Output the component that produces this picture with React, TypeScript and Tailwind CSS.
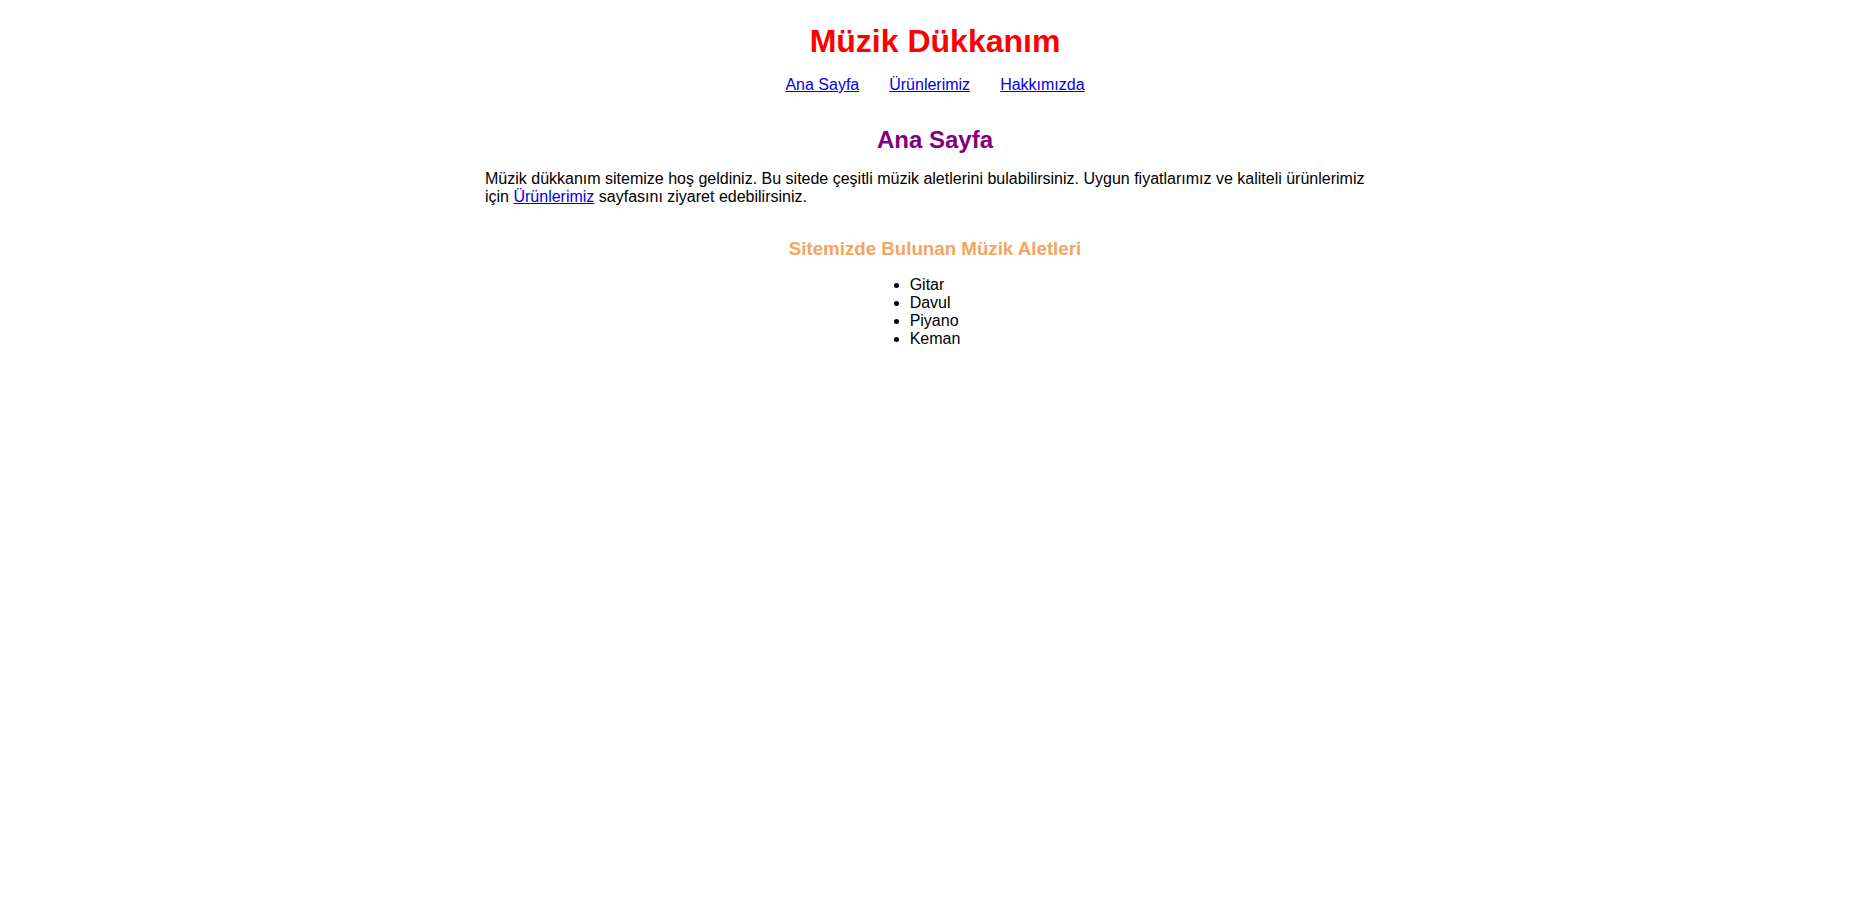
export default function App() {
    const links = ["Ana Sayfa", "Ürünlerimiz", "Hakkımızda"];
    const aletler = ["Gitar", "Davul", "Piyano", "Keman"];

    return (
        <div className="min-h-screen bg-white text-black font-['Liberation_Sans',Arial,sans-serif] text-base leading-[normal] pt-[23px] pr-[3px]">
            <header className="text-center">
                <h1 className="text-[32px] font-bold leading-[normal] text-[#ff0000]">
                    Müzik Dükkanım
                </h1>
                <nav className="mt-4 flex justify-center gap-[30px]">
                    {links.map((l) => (
                        <a key={l} href="#" className="text-[#0000ee] underline">
                            {l}
                        </a>
                    ))}
                </nav>
            </header>

            <main className="max-w-[900px] mx-auto">
                <h2 className="mt-8 text-center text-2xl font-bold leading-[normal] text-[#800080]">
                    Ana Sayfa
                </h2>
                <p className="mt-4">
                    Müzik dükkanım sitemize hoş geldiniz. Bu sitede çeşitli müzik aletlerini
                    bulabilirsiniz. Uygun fiyatlarımız ve kaliteli ürünlerimiz için{" "}
                    <a href="#" className="text-[#0000ee] underline">
                        Ürünlerimiz
                    </a>{" "}
                    sayfasını ziyaret edebilirsiniz.
                </p>

                <section className="mt-8 text-center">
                    <h3 className="text-[18.72px] font-bold leading-[normal] text-[#f4a460]">
                        Sitemizde Bulunan Müzik Aletleri
                    </h3>
                    <ul className="mt-4 inline-block list-disc text-left">
                        {aletler.map((a) => (
                            <li key={a}>{a}</li>
                        ))}
                    </ul>
                </section>
            </main>
        </div>
    );
}
